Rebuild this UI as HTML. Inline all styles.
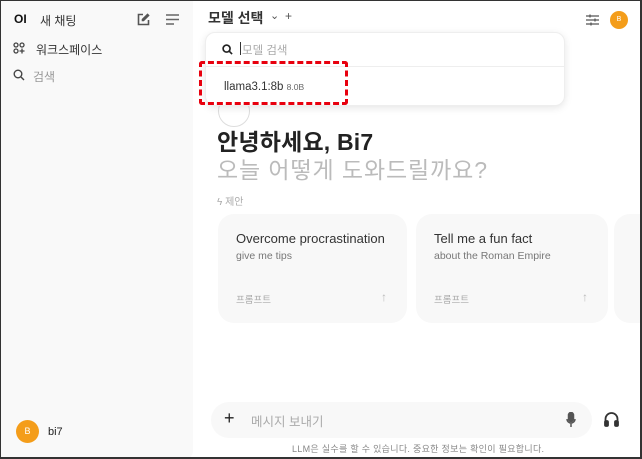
<!DOCTYPE html>
<html><head><meta charset="utf-8"><style>
*{box-sizing:border-box;margin:0;padding:0}
body{width:642px;height:459px;overflow:hidden;font-family:"Liberation Sans","Noto Sans CJK KR",sans-serif;background:#fff;position:relative;color:#222}
.frame{position:absolute;inset:0;border:1px solid #333;border-right-width:2px;border-bottom-width:2px;pointer-events:none;z-index:50}
.side{position:absolute;left:0;top:0;width:193px;height:459px;background:#f9f9f9;border-radius:0 0 8px 0}
.abs{position:absolute}
.card{position:absolute;top:214px;width:189px;height:109px;background:#f8f8f8;border-radius:16px}
.card .t{position:absolute;left:18px;top:17px;font-size:13px;color:#333}
.card .s{position:absolute;left:18px;top:36px;font-size:10.5px;color:#777}
.card .p{position:absolute;left:18px;top:78px;font-size:9.5px;color:#aaa}
.card .a{position:absolute;right:20px;top:76px;color:#bbb;font-size:12px}
</style></head><body>
<div class="side">
  <div class="abs" style="left:14px;top:12px;font-weight:bold;font-size:12px;color:#111">OI</div>
  <div class="abs" style="left:40px;top:12px;font-size:12px;color:#333">새 채팅</div>
  <svg class="abs" style="left:136px;top:13px" width="14" height="14" viewBox="0 0 14 14" fill="none" stroke="#555" stroke-width="1.6"><path d="M7 1.5H2.5v10h10V7"/><path d="M11.5 1.5l1 1-5 5H6.5V6.5z"/></svg>
  <svg class="abs" style="left:166px;top:14px" width="13" height="11" viewBox="0 0 13 11" stroke="#666" stroke-width="1.4"><path d="M0 1h13M0 5.5h13M0 10h8"/></svg>
  <svg class="abs" style="left:13px;top:42px" width="12" height="12" viewBox="0 0 12 12" fill="none" stroke="#444" stroke-width="1.3"><circle cx="3" cy="3" r="2"/><circle cx="9" cy="3" r="2"/><circle cx="3" cy="9" r="2"/><path d="M9 6.5v5M6.5 9h5"/></svg>
  <div class="abs" style="left:36px;top:41px;font-size:12px;color:#333">워크스페이스</div>
  <svg class="abs" style="left:13px;top:69px" width="12" height="12" viewBox="0 0 12 12" fill="none" stroke="#444" stroke-width="1.4"><circle cx="5" cy="5" r="3.8"/><path d="M8 8l3 3"/></svg>
  <div class="abs" style="left:33px;top:68px;font-size:12px;color:#999">검색</div>
  <div class="abs" style="left:16px;top:420px;width:23px;height:23px;border-radius:50%;background:#f49d1a;color:#fff;font-size:9px;text-align:center;line-height:23px">B</div>
  <div class="abs" style="left:48px;top:426px;font-size:11px;color:#222">bi7</div>
</div>
<div class="abs" style="left:208px;top:8px;font-size:14px;font-weight:bold;color:#333">모델 선택</div>
<div class="abs" style="left:270px;top:9px;font-size:11px;color:#555">⌄</div>
<div class="abs" style="left:285px;top:9px;font-size:12px;color:#555">+</div>
<svg class="abs" style="left:586px;top:14px" width="13" height="12" viewBox="0 0 13 12" stroke="#555" stroke-width="1.3"><path d="M0 2h13M0 6h13M0 10h13"/><path d="M4 0.5v3M9 4.5v3M5 8.5v3"/></svg>
<div class="abs" style="left:610px;top:11px;width:18px;height:18px;border-radius:50%;background:#f49d1a;color:#fff;font-size:7px;text-align:center;line-height:18px">B</div>
<div class="abs" style="left:218px;top:95px;width:32px;height:32px;border-radius:50%;border:1px solid #ddd;background:#fff"></div>
<div class="abs" style="left:205px;top:32px;width:360px;height:74px;background:#fff;border:1px solid #eee;border-radius:10px;box-shadow:0 2px 8px rgba(0,0,0,.1)">
  <svg class="abs" style="left:16px;top:11px" width="11" height="11" viewBox="0 0 12 12" fill="none" stroke="#222" stroke-width="1.8"><circle cx="5" cy="5" r="3.8"/><path d="M8 8l3 3"/></svg>
  <div class="abs" style="left:34px;top:9px;width:1px;height:13px;background:#333"></div>
  <div class="abs" style="left:36px;top:9px;font-size:11.5px;color:#aaa">모델 검색</div>
  <div class="abs" style="left:0;top:33px;width:358px;height:1px;background:#eee"></div>
  <div class="abs" style="left:18px;top:48px;font-size:11.5px;color:#333">llama3.1:8b <span style="font-size:8.5px;color:#666">8.0B</span></div>
</div>
<div class="abs" style="left:199px;top:61px;width:149px;height:44px;border:3px dashed #e8000e;border-radius:3px"></div>
<div class="abs" style="left:217px;top:128px;font-size:23px;line-height:28px;font-weight:bold;color:#222;letter-spacing:0.2px">안녕하세요, Bi7</div>
<div class="abs" style="left:217px;top:156px;font-size:23px;line-height:28px;color:#bbb;letter-spacing:0.9px">오늘 어떻게 도와드릴까요?</div>
<div class="abs" style="left:217px;top:193px;font-size:10px;color:#aaa">ϟ 제안</div>
<div class="card" style="left:218px"><div class="t">Overcome procrastination</div><div class="s">give me tips</div><div class="p">프롬프트</div><div class="a">↑</div></div>
<div class="card" style="left:416px;width:192px"><div class="t">Tell me a fun fact</div><div class="s">about the Roman Empire</div><div class="p">프롬프트</div><div class="a">↑</div></div>
<div class="abs" style="left:614px;top:214px;width:30px;height:109px;background:#f8f8f8;border-radius:16px 0 0 16px"></div>
<div class="abs" style="left:211px;top:402px;width:381px;height:36px;background:#f8f8f8;border-radius:18px"></div>
<div class="abs" style="left:224px;top:408px;font-size:18px;color:#222">+</div>
<div class="abs" style="left:251px;top:411px;font-size:12.5px;color:#aaa">메시지 보내기</div>
<svg class="abs" style="left:566px;top:412px" width="10" height="16" viewBox="0 0 10 16" fill="none" stroke="#555" stroke-width="1.5"><rect x="2.5" y="0.5" width="5" height="9" rx="2.5" fill="#555"/><path d="M1 7a4 4 0 008 0M5 11v4"/></svg>
<svg class="abs" style="left:604px;top:411px" width="15" height="16" viewBox="0 0 15 16" fill="none" stroke="#333" stroke-width="1.8"><path d="M1.5 11V8a6 6 0 0112 0v3"/><rect x="1" y="10" width="3" height="5" rx="1" fill="#333"/><rect x="11" y="10" width="3" height="5" rx="1" fill="#333"/></svg>
<div class="abs" style="left:292px;top:442px;font-size:9px;color:#888;letter-spacing:0.3px">LLM은 실수를 할 수 있습니다. 중요한 정보는 확인이 필요합니다.</div>
<div class="frame"></div>
</body></html>
